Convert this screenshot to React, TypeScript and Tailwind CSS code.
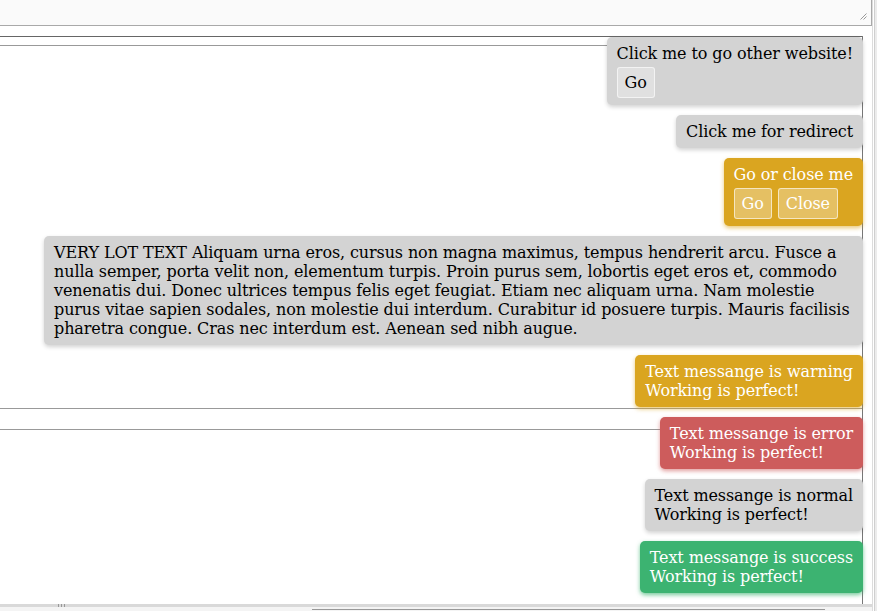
import React from 'react';

type Kind = 'normal' | 'warning' | 'error' | 'success';

interface ToastProps {
  kind: Kind;
  children: React.ReactNode;
  buttons?: string[];
  wide?: boolean;
}

const kindClass: Record<Kind, string> = {
  normal: 'bg-[#d3d3d3] text-black shadow-[0_2px_4px_rgba(0,0,0,0.18)]',
  warning: 'bg-[#daa520] text-white shadow-[0_2px_4px_rgba(218,165,32,0.6)]',
  error: 'bg-[#cd5c5c] text-white shadow-[0_2px_4px_rgba(205,92,92,0.6)]',
  success: 'bg-[#3cb371] text-white shadow-[0_2px_4px_rgba(60,179,113,0.7)]',
};

const Toast: React.FC<ToastProps> = ({ kind, children, buttons, wide }) => {
  return (
    <div className={`rounded-[5px] px-[10px] py-[7px] leading-[19px] ${kindClass[kind]} ${wide ? 'max-w-[819px]' : ''}`}>
      <div>{children}</div>
      {buttons && (
        <div className="flex gap-[6px] mt-[4px]">
          {buttons.map(b => (
            <button
              key={b}
              className="bg-white/30 border border-white/60 rounded-[3px] px-[7px] py-[5px] leading-[19px]"
            >
              {b}
            </button>
          ))}
        </div>
      )}
    </div>
  );
};

const App: React.FC = () => {
  return (
    <div className="relative h-[611px] w-[877px] overflow-hidden bg-white font-['DejaVu_Serif',serif] text-[16px] tracking-[-0.11px]">
      <div className="flex h-full">
        <div className="flex flex-col w-[873px] border-r border-[#dcdcdc]">
          {/* textarea */}
          <div className="relative h-[26px] w-[872px] bg-[#fafafa] border-b border-r border-[#a9a9a9]">
            <svg className="absolute right-[4px] bottom-[5px]" width="7" height="7" viewBox="0 0 7 7">
              <line x1="6.5" y1="0.5" x2="0.5" y2="6.5" stroke="#999" strokeWidth="1" />
              <line x1="6.5" y1="3.5" x2="3.5" y2="6.5" stroke="#999" strokeWidth="1" />
            </svg>
          </div>

          <div className="mt-[10px] flex-1 w-[863px] border-r border-[#777] flex flex-col">
            <div className="border-t border-[#666] h-[9px]" />
            <div className="h-[364px] border-y border-[#999]" />
            <div className="h-[20px]" />
            <div className="flex-1 border-t border-[#999]" />
          </div>

          {/* horizontal scrollbar */}
          <div className="relative h-[3px] bg-[#d9d9d9]">
            <div className="absolute left-[58px] top-0 flex gap-[2px]">
              <div className="w-px h-[3px] bg-[#999]" />
              <div className="w-px h-[3px] bg-[#999]" />
              <div className="w-px h-[3px] bg-[#999]" />
            </div>
          </div>
          <div className="h-[4px] bg-[#f4f4f4] pl-[312px] pt-[2px]">
            <div className="w-[513px] h-px bg-[#999]" />
          </div>
        </div>
        <div className="w-px" />
        <div className="flex-1 bg-[#ececec] border-l border-[#cfcfcf]" />
      </div>

      <div className="absolute top-[37px] right-[14px] flex flex-col items-end gap-[10px]">
        <Toast kind="normal" buttons={['Go']}>Click me to go other website!</Toast>
        <Toast kind="normal">Click me for redirect</Toast>
        <Toast kind="warning" buttons={['Go', 'Close']}>Go or close me</Toast>
        <Toast kind="normal" wide>
          VERY LOT TEXT Aliquam urna eros, cursus non magna maximus, tempus hendrerit arcu. Fusce a nulla semper, porta velit non, elementum turpis. Proin purus sem, lobortis eget eros et, commodo venenatis dui. Donec ultrices tempus felis eget feugiat. Etiam nec aliquam urna. Nam molestie purus vitae sapien sodales, non molestie dui interdum. Curabitur id posuere turpis. Mauris facilisis pharetra congue. Cras nec interdum est. Aenean sed nibh augue.
        </Toast>
        <Toast kind="warning">
          Text messange is warning
          <br />
          Working is perfect!
        </Toast>
        <Toast kind="error">
          Text messange is error
          <br />
          Working is perfect!
        </Toast>
        <Toast kind="normal">
          Text messange is normal
          <br />
          Working is perfect!
        </Toast>
        <Toast kind="success">
          Text messange is success
          <br />
          Working is perfect!
        </Toast>
      </div>
    </div>
  );
};

export default App;
